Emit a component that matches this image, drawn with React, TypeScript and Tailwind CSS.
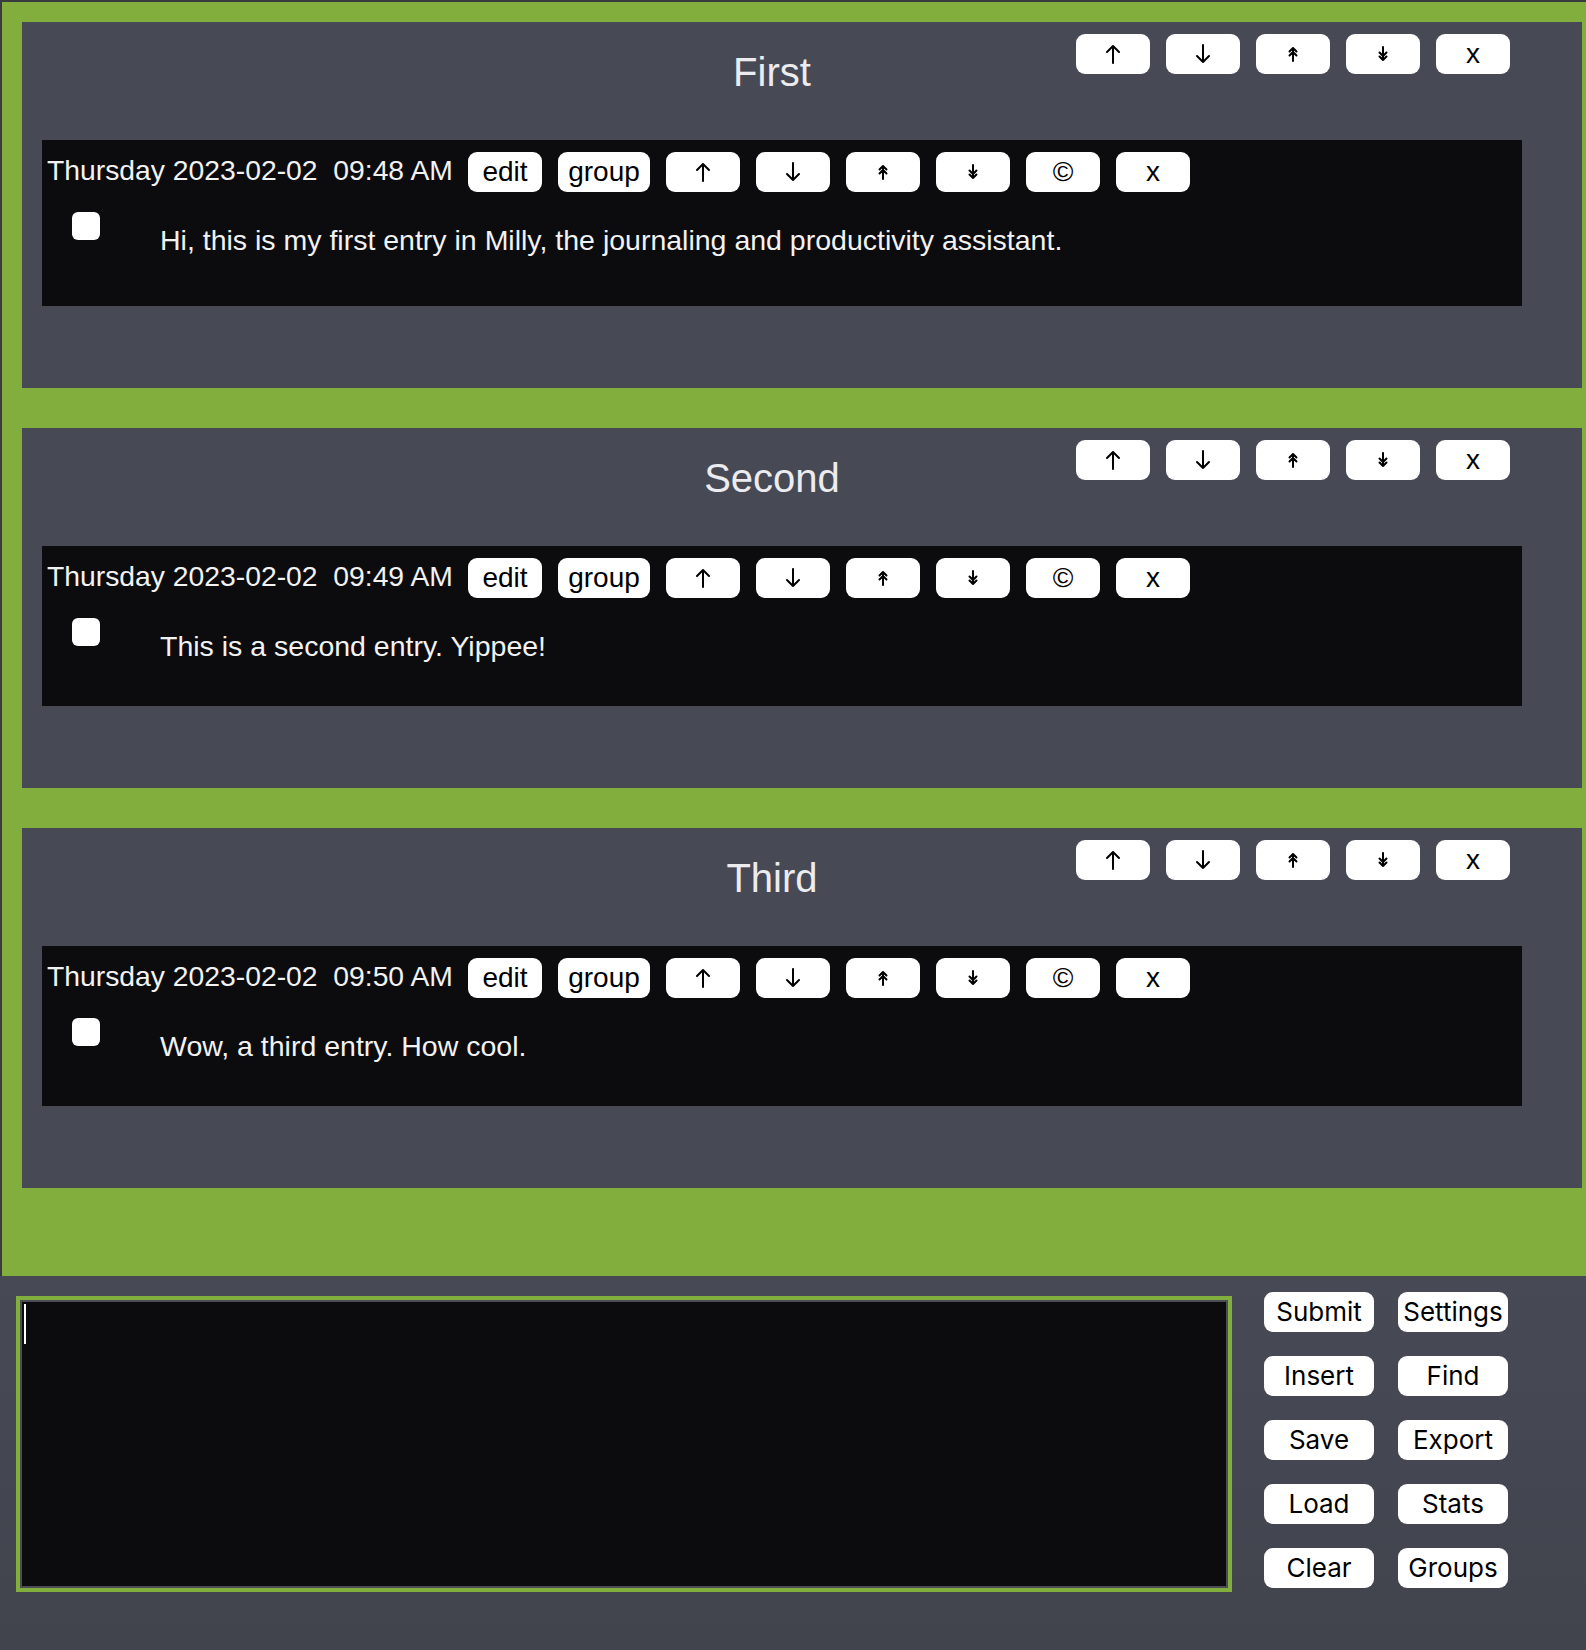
import React from "react";

const GREEN = "bg-[#81ae3d]";

type Entry = {
  time: string;
  text: string;
  tall?: boolean;
};

type Group = {
  title: string;
  entry: Entry;
};

const GROUPS: Group[] = [
  {
    title: "First",
    entry: {
      time: "09:48 AM",
      text: "Hi, this is my first entry in Milly, the journaling and productivity assistant.",
      tall: true,
    },
  },
  {
    title: "Second",
    entry: { time: "09:49 AM", text: "This is a second entry. Yippee!" },
  },
  {
    title: "Third",
    entry: { time: "09:50 AM", text: "Wow, a third entry. How cool." },
  },
];

const SIDE_BUTTONS = [
  ["Submit", "Settings"],
  ["Insert", "Find"],
  ["Save", "Export"],
  ["Load", "Stats"],
  ["Clear", "Groups"],
];

const ArrowUp = () => (
  <svg width="16" height="20" viewBox="0 0 16 20" fill="none" stroke="currentColor" strokeWidth="2" strokeLinecap="round" strokeLinejoin="round">
    <path d="M8 19V2M2 8l6-6 6 6" />
  </svg>
);

const ArrowDown = () => (
  <svg width="16" height="20" viewBox="0 0 16 20" fill="none" stroke="currentColor" strokeWidth="2" strokeLinecap="round" strokeLinejoin="round">
    <path d="M8 1v17M2 12l6 6 6-6" />
  </svg>
);

const ArrowTop = () => (
  <svg width="10" height="16" viewBox="0 0 10 16" fill="none" stroke="currentColor" strokeWidth="2" strokeLinecap="round" strokeLinejoin="round">
    <path d="M5 15V2M1.5 5.5 5 2l3.5 3.5M1.5 9.5 5 6l3.5 3.5" />
  </svg>
);

const ArrowBottom = () => (
  <svg width="10" height="16" viewBox="0 0 10 16" fill="none" stroke="currentColor" strokeWidth="2" strokeLinecap="round" strokeLinejoin="round">
    <path d="M5 1v13M1.5 10.5 5 14l3.5-3.5M1.5 6.5 5 10l3.5-3.5" />
  </svg>
);

const Btn: React.FC<{ children: React.ReactNode; wide?: boolean }> = ({ children, wide }) => (
  <button
    className={`flex h-10 shrink-0 items-center justify-center rounded-[9px] bg-white text-[28px] leading-none text-black ${
      wide ? "w-[92px]" : "w-[74px]"
    }`}
  >
    {children}
  </button>
);

const MoveButtons = () => (
  <>
    <Btn>
      <ArrowUp />
    </Btn>
    <Btn>
      <ArrowDown />
    </Btn>
    <Btn>
      <ArrowTop />
    </Btn>
    <Btn>
      <ArrowBottom />
    </Btn>
  </>
);

const EntryBox: React.FC<{ entry: Entry }> = ({ entry }) => (
  <div className={`ml-5 w-[1480px] bg-[#0c0b0d] ${entry.tall ? "h-[166px]" : "h-[160px]"}`}>
    <div className="flex items-start pl-[5px] pt-3">
      <span className="mt-[2px] w-[421px] shrink-0 whitespace-pre text-[28.3px] leading-[32px] text-[#f2f2f2]">
        Thursday 2023-02-02{"  "}
        {entry.time}
      </span>
      <div className="flex gap-4">
        <Btn>edit</Btn>
        <Btn wide>group</Btn>
        <MoveButtons />
        <Btn>©</Btn>
        <Btn>x</Btn>
      </div>
    </div>
    <div className="mt-5 flex items-start pl-[30px]">
      <div className="h-7 w-7 shrink-0 rounded-[6px] bg-white" />
      <p className="ml-[60px] mt-3 text-[28.5px] leading-[32px] text-[#f2f2f2]">{entry.text}</p>
    </div>
  </div>
);

const Panel: React.FC<{ group: Group }> = ({ group }) => (
  <div className="relative w-[1560px] bg-[#474a55] pb-[82px]">
    <h2 className="h-[118px] w-[1500px] pt-[27px] text-center text-[40px] font-normal leading-[46px] text-[#ececf0]">
      {group.title}
    </h2>
    <div className="absolute left-[1054px] top-3 flex gap-4">
      <MoveButtons />
      <Btn>x</Btn>
    </div>
    <EntryBox entry={group.entry} />
  </div>
);

export default function App() {
  return (
    <div className="min-h-[1650px] w-full overflow-hidden bg-[#3a3b3f] font-['Liberation_Sans',Arial,sans-serif]">
      <section className={`ml-[2px] mt-[2px] flex flex-col gap-10 pb-[88px] pl-5 pt-5 ${GREEN}`}>
        {GROUPS.map((g) => (
          <Panel key={g.title} group={g} />
        ))}
      </section>

      <section className="flex h-[374px] items-start bg-linear-to-b from-[#474a55] to-[#41434d] pl-4 pt-4">
        <div className="mt-1 h-[296px] w-[1216px] shrink-0 border-4 border-[#81ae3d]">
          <div className="h-full w-full border-2 border-[#4b4c56] bg-[#0c0b0d] p-[2px]">
            <div className="h-10 w-[2px] bg-white" />
          </div>
        </div>
        <div className="ml-8 grid grid-cols-[110px_110px] gap-6 font-['Inter',sans-serif]">
          {SIDE_BUTTONS.flat().map((label) => (
            <button
              key={label}
              className="flex h-10 items-center justify-center rounded-[9px] bg-white text-[26px] leading-none text-black"
            >
              {label}
            </button>
          ))}
        </div>
      </section>
    </div>
  );
}
